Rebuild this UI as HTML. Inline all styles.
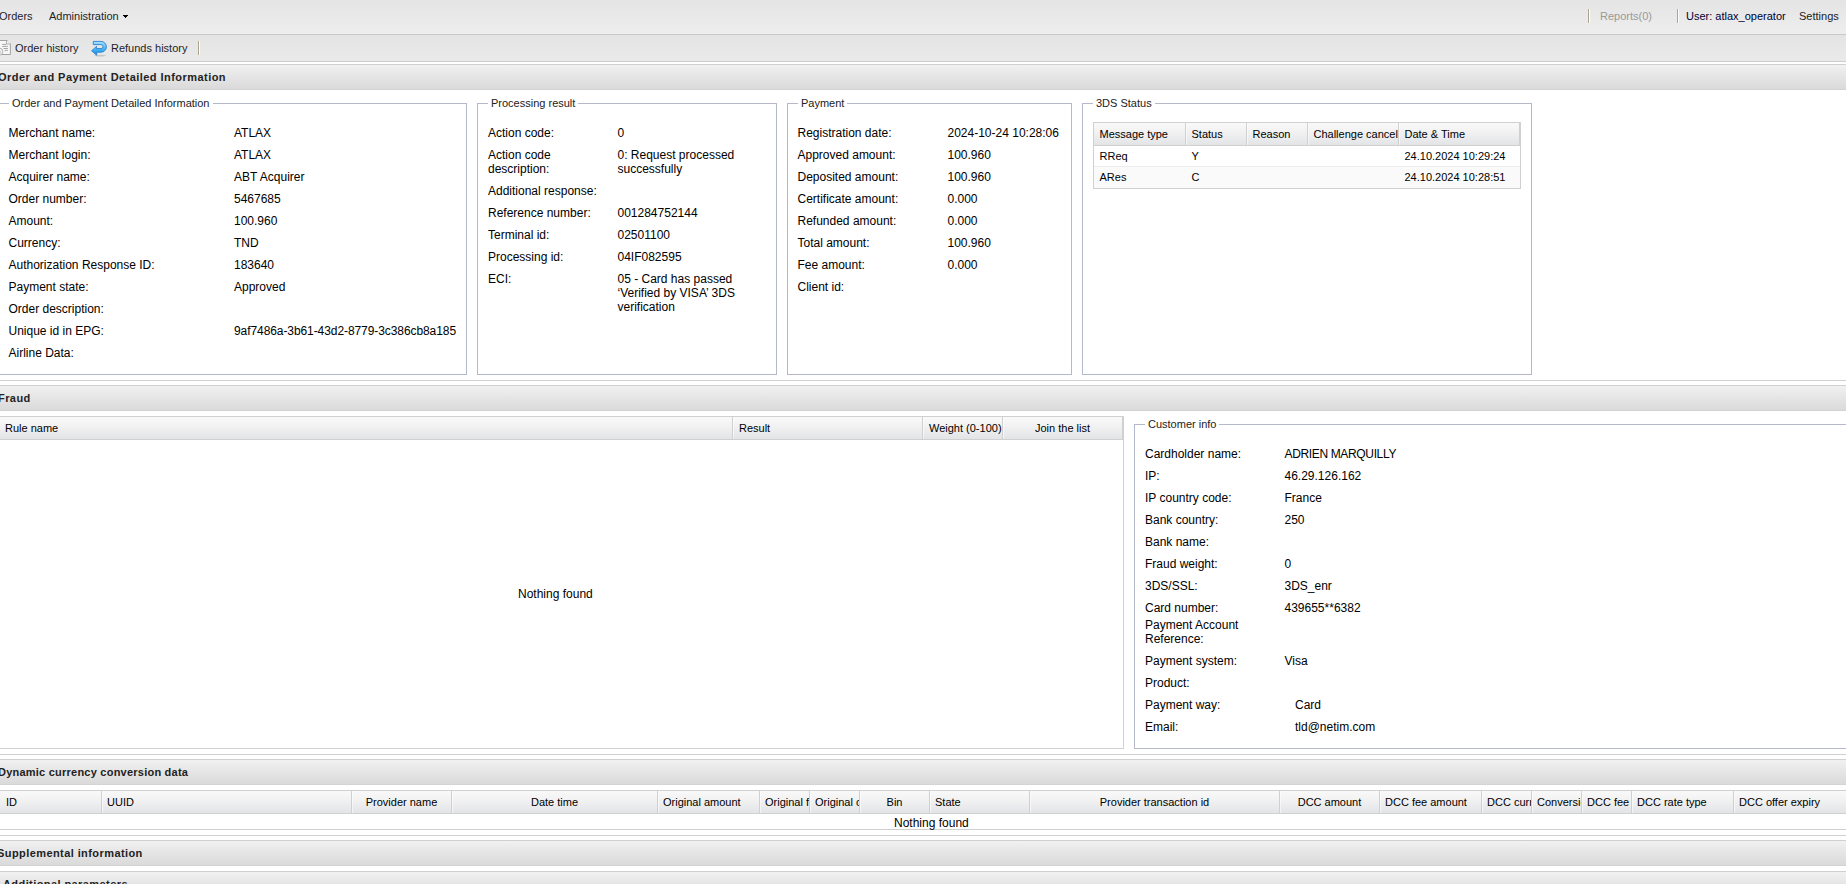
<!DOCTYPE html><html><head><meta charset="utf-8"><title>Order</title><style>
*{margin:0;padding:0;box-sizing:border-box}
html,body{width:1846px;height:884px;overflow:hidden;background:#fff}
body{position:relative;font-family:"Liberation Sans",sans-serif;color:#000}
.b{position:absolute}
.t12,.t11,.tb,.lg{position:absolute;white-space:pre;line-height:14px}
.t12{font-size:12px;color:#000}
.t11{font-size:11px;color:#000}
.tb{font-size:11px;font-weight:bold;color:#222;letter-spacing:0.42px}
.lg{font-size:11px;color:#222;background:#fff;padding:0 3px 0 3px}
.ph{position:absolute;left:0;width:1846px;height:26px;border-top:1px solid #d0d0d0;border-bottom:1px solid #d3d3d3;background:linear-gradient(#f1f1f1,#e6e6e6 45%,#dadada)}
.fs{position:absolute;border:1px solid #b5b8c8}
.gh{position:absolute;height:24px;border-top:1px solid #d0d0d0;border-bottom:1px solid #d0d0d0;background:linear-gradient(#f9f9f9,#f2f2f3 40%,#e3e4e6)}
.sep{position:absolute;width:1px;background:#d0d0d0}
.ov{position:absolute;overflow:hidden;white-space:pre;line-height:14px;font-size:11px}
</style></head><body>
<div class="b" style="left:0px;top:0px;width:1846px;height:34px;background:linear-gradient(#e4e4e4,#eeeeee)"></div>
<div class="b" style="left:0px;top:34px;width:1846px;height:1px;background:#c9c9c9"></div>
<div class="t11" style="left:-1px;top:9px;color:#1e1e2a">Orders</div>
<div class="t11" style="left:49px;top:9px;color:#1e1e2a">Administration</div>
<div class="b" style="left:123px;top:15px;width:5px;height:1px;background:#000"></div>
<div class="b" style="left:124px;top:16px;width:3px;height:1px;background:#000"></div>
<div class="b" style="left:125px;top:17px;width:1px;height:1px;background:#000"></div>
<div class="b" style="left:1588px;top:9px;width:1px;height:14px;background:#aca48e;box-shadow:1px 0 0 #fff"></div>
<div class="t11" style="left:1600px;top:9px;color:#999">Reports(0)</div>
<div class="b" style="left:1677px;top:9px;width:1px;height:14px;background:#aca48e;box-shadow:1px 0 0 #fff"></div>
<div class="t11" style="left:1686px;top:9px;color:#000033">User: atlax_operator</div>
<div class="t11" style="left:1799px;top:9px;color:#222">Settings</div>
<div class="b" style="left:0px;top:35px;width:1846px;height:26px;background:linear-gradient(#e4e4e4,#eaeaea)"></div>
<div class="b" style="left:0px;top:61px;width:1846px;height:1px;background:#cbcbcb"></div>
<svg class="b" style="left:-1px;top:39px" width="14" height="17" viewBox="0 0 14 17">
<path d="M-3 1.5H8.2L11.4 4.7V15.5H-3Z" fill="#f7f7f7" stroke="#a2a2a2" stroke-width="1"/>
<path d="M7.5 1.5V5H11.4" fill="none" stroke="#a8a8a8" stroke-width="0.9"/>
<path d="M7.7 1.7L11.2 5V1.7Z" fill="#e9e9e9"/>
<path d="M3.2 5.4H7.3M3.2 7.4H8.9M4.5 9.5H8.9M5.6 11.4H8.9" stroke="#9c9c9c" stroke-width="0.9"/>
<circle cx="0.3" cy="12.6" r="3.6" fill="#ececec" stroke="#b0b0b0" stroke-width="0.9"/>
<path d="M-1 13.2H1.4" stroke="#666" stroke-width="1"/>
</svg>
<div class="t11" style="left:15px;top:41px;color:#1e1e2a">Order history</div>
<svg class="b" style="left:90px;top:40px" width="18" height="17" viewBox="0 0 18 17">
<defs><linearGradient id="rg" x1="0" y1="0" x2="0" y2="1"><stop offset="0" stop-color="#a8e2ff"/><stop offset="0.5" stop-color="#4fb9f5"/><stop offset="1" stop-color="#0d8fe6"/></linearGradient></defs>
<ellipse cx="10" cy="15.6" rx="6" ry="0.9" fill="#000" opacity="0.15"/>
<path d="M3.3 1.4H11A5.4 5.4 0 0 1 11 12.2H6.7V15.2L1.6 10.8L6.5 6.4V8.6H11A2 2 0 0 0 11 4.6H3.3Z" fill="url(#rg)" stroke="#2a7fcf" stroke-width="0.9" stroke-linejoin="round"/>
</svg>
<div class="t11" style="left:111px;top:41px;color:#1e1e2a">Refunds history</div>
<div class="b" style="left:198px;top:41px;width:1px;height:14px;background:#aca48e;box-shadow:1px 0 0 #fff"></div>
<div class="ph" style="top:64px"></div>
<div class="tb" style="left:-2px;top:70px;letter-spacing:0.45px">Order and Payment Detailed Information</div>
<div class="b" style="left:0px;top:380px;width:1846px;height:1px;background:#d0d0d0"></div>
<div class="fs" style="left:-2px;top:103px;width:469px;height:272px"></div>
<div class="lg" style="left:9px;top:96px">Order and Payment Detailed Information</div>
<div class="fs" style="left:477px;top:103px;width:300px;height:272px"></div>
<div class="lg" style="left:488px;top:96px">Processing result</div>
<div class="fs" style="left:787px;top:103px;width:285px;height:272px"></div>
<div class="lg" style="left:798px;top:96px">Payment</div>
<div class="fs" style="left:1082px;top:103px;width:450px;height:272px"></div>
<div class="lg" style="left:1093px;top:96px">3DS Status</div>
<div class="t12" style="left:8.5px;top:126px;">Merchant name:</div>
<div class="t12" style="left:234px;top:126px;">ATLAX</div>
<div class="t12" style="left:8.5px;top:148px;">Merchant login:</div>
<div class="t12" style="left:234px;top:148px;">ATLAX</div>
<div class="t12" style="left:8.5px;top:170px;">Acquirer name:</div>
<div class="t12" style="left:234px;top:170px;">ABT Acquirer</div>
<div class="t12" style="left:8.5px;top:192px;">Order number:</div>
<div class="t12" style="left:234px;top:192px;">5467685</div>
<div class="t12" style="left:8.5px;top:214px;">Amount:</div>
<div class="t12" style="left:234px;top:214px;">100.960</div>
<div class="t12" style="left:8.5px;top:236px;">Currency:</div>
<div class="t12" style="left:234px;top:236px;">TND</div>
<div class="t12" style="left:8.5px;top:258px;">Authorization Response ID:</div>
<div class="t12" style="left:234px;top:258px;">183640</div>
<div class="t12" style="left:8.5px;top:280px;">Payment state:</div>
<div class="t12" style="left:234px;top:280px;">Approved</div>
<div class="t12" style="left:8.5px;top:302px;">Order description:</div>
<div class="t12" style="left:8.5px;top:324px;">Unique id in EPG:</div>
<div class="t12" style="left:234px;top:324px;"><span style="letter-spacing:-0.08px">9af7486a-3b61-43d2-8779-3c386cb8a185</span></div>
<div class="t12" style="left:8.5px;top:346px;">Airline Data:</div>
<div class="t12" style="left:488px;top:126px;">Action code:</div>
<div class="t12" style="left:617.5px;top:126px;">0</div>
<div class="t12" style="left:488px;top:148px;">Action code
description:</div>
<div class="t12" style="left:617.5px;top:148px;">0: Request processed
successfully</div>
<div class="t12" style="left:488px;top:184px;">Additional response:</div>
<div class="t12" style="left:488px;top:206px;">Reference number:</div>
<div class="t12" style="left:617.5px;top:206px;">001284752144</div>
<div class="t12" style="left:488px;top:228px;">Terminal id:</div>
<div class="t12" style="left:617.5px;top:228px;">02501100</div>
<div class="t12" style="left:488px;top:250px;">Processing id:</div>
<div class="t12" style="left:617.5px;top:250px;">04IF082595</div>
<div class="t12" style="left:488px;top:272px;">ECI:</div>
<div class="t12" style="left:617.5px;top:272px;">05 - Card has passed
‘Verified by VISA’ 3DS
verification</div>
<div class="t12" style="left:797.5px;top:126px;">Registration date:</div>
<div class="t12" style="left:947.5px;top:126px;">2024-10-24 10:28:06</div>
<div class="t12" style="left:797.5px;top:148px;">Approved amount:</div>
<div class="t12" style="left:947.5px;top:148px;">100.960</div>
<div class="t12" style="left:797.5px;top:170px;">Deposited amount:</div>
<div class="t12" style="left:947.5px;top:170px;">100.960</div>
<div class="t12" style="left:797.5px;top:192px;">Certificate amount:</div>
<div class="t12" style="left:947.5px;top:192px;">0.000</div>
<div class="t12" style="left:797.5px;top:214px;">Refunded amount:</div>
<div class="t12" style="left:947.5px;top:214px;">0.000</div>
<div class="t12" style="left:797.5px;top:236px;">Total amount:</div>
<div class="t12" style="left:947.5px;top:236px;">100.960</div>
<div class="t12" style="left:797.5px;top:258px;">Fee amount:</div>
<div class="t12" style="left:947.5px;top:258px;">0.000</div>
<div class="t12" style="left:797.5px;top:280px;">Client id:</div>
<div class="b" style="left:1093px;top:122px;width:428px;height:67px;border:1px solid #d0d0d0;background:#fff"></div>
<div class="gh" style="left:1094px;top:122px;width:426px"></div>
<div class="b" style="left:1519px;top:123px;width:1px;height:22px;background:#d0d0d0"></div>
<div class="b" style="left:1185px;top:123px;width:1px;height:22px;background:#d0d0d0;box-shadow:1px 0 0 rgba(255,255,255,0.55)"></div>
<div class="b" style="left:1246px;top:123px;width:1px;height:22px;background:#d0d0d0;box-shadow:1px 0 0 rgba(255,255,255,0.55)"></div>
<div class="b" style="left:1307px;top:123px;width:1px;height:22px;background:#d0d0d0;box-shadow:1px 0 0 rgba(255,255,255,0.55)"></div>
<div class="b" style="left:1398px;top:123px;width:1px;height:22px;background:#d0d0d0;box-shadow:1px 0 0 rgba(255,255,255,0.55)"></div>
<div class="t11" style="left:1099.5px;top:127px;">Message type</div>
<div class="t11" style="left:1191.5px;top:127px;">Status</div>
<div class="t11" style="left:1252.5px;top:127px;">Reason</div>
<div class="t11" style="left:1313.5px;top:127px;">Challenge cancel</div>
<div class="t11" style="left:1404.5px;top:127px;">Date &amp; Time</div>
<div class="b" style="left:1094px;top:166px;width:426px;height:1px;background:#ededed"></div>
<div class="b" style="left:1094px;top:167px;width:426px;height:21px;background:#fafafa"></div>
<div class="t11" style="left:1099.5px;top:149px;">RReq</div>
<div class="t11" style="left:1191.5px;top:149px;">Y</div>
<div class="t11" style="left:1404.5px;top:149px;">24.10.2024 10:29:24</div>
<div class="t11" style="left:1099.5px;top:170px;">ARes</div>
<div class="t11" style="left:1191.5px;top:170px;">C</div>
<div class="t11" style="left:1404.5px;top:170px;">24.10.2024 10:28:51</div>
<div class="ph" style="top:385px"></div>
<div class="tb" style="left:-2px;top:391px;">Fraud</div>
<div class="b" style="left:-1px;top:416px;width:1125px;height:333px;border:1px solid #d0d0d0;background:#fff"></div>
<div class="gh" style="left:0px;top:416px;width:1123px"></div>
<div class="b" style="left:1122px;top:417px;width:1px;height:22px;background:#d0d0d0"></div>
<div class="b" style="left:732px;top:417px;width:1px;height:22px;background:#d0d0d0;box-shadow:1px 0 0 rgba(255,255,255,0.55)"></div>
<div class="b" style="left:922px;top:417px;width:1px;height:22px;background:#d0d0d0;box-shadow:1px 0 0 rgba(255,255,255,0.55)"></div>
<div class="b" style="left:1002px;top:417px;width:1px;height:22px;background:#d0d0d0;box-shadow:1px 0 0 rgba(255,255,255,0.55)"></div>
<div class="t11" style="left:5px;top:421px;">Rule name</div>
<div class="t11" style="left:739px;top:421px;">Result</div>
<div class="t11" style="left:929px;top:421px;">Weight (0-100)</div>
<div class="t11" style="left:1035px;top:421px;">Join the list</div>
<div class="t12" style="left:518px;top:587px;">Nothing found</div>
<div class="b" style="left:0px;top:754px;width:1846px;height:1px;background:#d0d0d0"></div>
<div class="fs" style="left:1134px;top:424px;width:720px;height:325px"></div>
<div class="lg" style="left:1145px;top:417px">Customer info</div>
<div class="t12" style="left:1145px;top:447px;">Cardholder name:</div>
<div class="t12" style="left:1284.5px;top:447px;"><span style="letter-spacing:-0.35px">ADRIEN MARQUILLY</span></div>
<div class="t12" style="left:1145px;top:469px;">IP:</div>
<div class="t12" style="left:1284.5px;top:469px;">46.29.126.162</div>
<div class="t12" style="left:1145px;top:491px;">IP country code:</div>
<div class="t12" style="left:1284.5px;top:491px;">France</div>
<div class="t12" style="left:1145px;top:513px;">Bank country:</div>
<div class="t12" style="left:1284.5px;top:513px;">250</div>
<div class="t12" style="left:1145px;top:535px;">Bank name:</div>
<div class="t12" style="left:1145px;top:557px;">Fraud weight:</div>
<div class="t12" style="left:1284.5px;top:557px;">0</div>
<div class="t12" style="left:1145px;top:579px;">3DS/SSL:</div>
<div class="t12" style="left:1284.5px;top:579px;">3DS_enr</div>
<div class="t12" style="left:1145px;top:601px;">Card number:</div>
<div class="t12" style="left:1284.5px;top:601px;">439655**6382</div>
<div class="t12" style="left:1145px;top:618px;">Payment Account
Reference:</div>
<div class="t12" style="left:1145px;top:654px;">Payment system:</div>
<div class="t12" style="left:1284.5px;top:654px;">Visa</div>
<div class="t12" style="left:1145px;top:676px;">Product:</div>
<div class="t12" style="left:1145px;top:698px;">Payment way:</div>
<div class="t12" style="left:1295px;top:698px;">Card</div>
<div class="t12" style="left:1145px;top:720px;">Email:</div>
<div class="t12" style="left:1295px;top:720px;">tld@netim.com</div>
<div class="ph" style="top:759px"></div>
<div class="tb" style="left:-2px;top:765px;letter-spacing:0.23px">Dynamic currency conversion data</div>
<div class="b" style="left:-1px;top:790px;width:1848px;height:40px;border:1px solid #d0d0d0;background:#fff"></div>
<div class="gh" style="left:0px;top:790px;width:1846px"></div>
<div class="b" style="left:101px;top:791px;width:1px;height:22px;background:#d0d0d0;box-shadow:1px 0 0 rgba(255,255,255,0.55)"></div>
<div class="b" style="left:351px;top:791px;width:1px;height:22px;background:#d0d0d0;box-shadow:1px 0 0 rgba(255,255,255,0.55)"></div>
<div class="b" style="left:451px;top:791px;width:1px;height:22px;background:#d0d0d0;box-shadow:1px 0 0 rgba(255,255,255,0.55)"></div>
<div class="b" style="left:657px;top:791px;width:1px;height:22px;background:#d0d0d0;box-shadow:1px 0 0 rgba(255,255,255,0.55)"></div>
<div class="b" style="left:759px;top:791px;width:1px;height:22px;background:#d0d0d0;box-shadow:1px 0 0 rgba(255,255,255,0.55)"></div>
<div class="b" style="left:809px;top:791px;width:1px;height:22px;background:#d0d0d0;box-shadow:1px 0 0 rgba(255,255,255,0.55)"></div>
<div class="b" style="left:859px;top:791px;width:1px;height:22px;background:#d0d0d0;box-shadow:1px 0 0 rgba(255,255,255,0.55)"></div>
<div class="b" style="left:929px;top:791px;width:1px;height:22px;background:#d0d0d0;box-shadow:1px 0 0 rgba(255,255,255,0.55)"></div>
<div class="b" style="left:1029px;top:791px;width:1px;height:22px;background:#d0d0d0;box-shadow:1px 0 0 rgba(255,255,255,0.55)"></div>
<div class="b" style="left:1279px;top:791px;width:1px;height:22px;background:#d0d0d0;box-shadow:1px 0 0 rgba(255,255,255,0.55)"></div>
<div class="b" style="left:1379px;top:791px;width:1px;height:22px;background:#d0d0d0;box-shadow:1px 0 0 rgba(255,255,255,0.55)"></div>
<div class="b" style="left:1481px;top:791px;width:1px;height:22px;background:#d0d0d0;box-shadow:1px 0 0 rgba(255,255,255,0.55)"></div>
<div class="b" style="left:1531px;top:791px;width:1px;height:22px;background:#d0d0d0;box-shadow:1px 0 0 rgba(255,255,255,0.55)"></div>
<div class="b" style="left:1581px;top:791px;width:1px;height:22px;background:#d0d0d0;box-shadow:1px 0 0 rgba(255,255,255,0.55)"></div>
<div class="b" style="left:1631px;top:791px;width:1px;height:22px;background:#d0d0d0;box-shadow:1px 0 0 rgba(255,255,255,0.55)"></div>
<div class="b" style="left:1733px;top:791px;width:1px;height:22px;background:#d0d0d0;box-shadow:1px 0 0 rgba(255,255,255,0.55)"></div>
<div class="ov" style="left:1px;top:795px;width:100px;padding-left:5px">ID</div>
<div class="ov" style="left:102px;top:795px;width:249px;padding-left:5px">UUID</div>
<div class="ov" style="left:352px;top:795px;width:99px;text-align:center">Provider name</div>
<div class="ov" style="left:452px;top:795px;width:205px;text-align:center">Date time</div>
<div class="ov" style="left:658px;top:795px;width:101px;padding-left:5px">Original amount</div>
<div class="ov" style="left:760px;top:795px;width:49px;padding-left:5px">Original fee</div>
<div class="ov" style="left:810px;top:795px;width:49px;padding-left:5px">Original currency</div>
<div class="ov" style="left:860px;top:795px;width:69px;text-align:center">Bin</div>
<div class="ov" style="left:930px;top:795px;width:99px;padding-left:5px">State</div>
<div class="ov" style="left:1030px;top:795px;width:249px;text-align:center">Provider transaction id</div>
<div class="ov" style="left:1280px;top:795px;width:99px;text-align:center">DCC amount</div>
<div class="ov" style="left:1380px;top:795px;width:101px;padding-left:5px">DCC fee amount</div>
<div class="ov" style="left:1482px;top:795px;width:49px;padding-left:5px">DCC currency</div>
<div class="ov" style="left:1532px;top:795px;width:49px;padding-left:5px">Conversion rate</div>
<div class="ov" style="left:1582px;top:795px;width:49px;padding-left:5px">DCC fee</div>
<div class="ov" style="left:1632px;top:795px;width:101px;padding-left:5px">DCC rate type</div>
<div class="ov" style="left:1734px;top:795px;width:112px;padding-left:5px">DCC offer expiry</div>
<div class="t12" style="left:894px;top:816px;">Nothing found</div>
<div class="b" style="left:0px;top:835px;width:1846px;height:1px;background:#d0d0d0"></div>
<div class="ph" style="top:840px"></div>
<div class="tb" style="left:-3px;top:846px;">Supplemental information</div>
<div class="ph" style="top:871px"></div>
<div class="tb" style="left:3px;top:877px;">Additional parameters</div>
</body></html>
